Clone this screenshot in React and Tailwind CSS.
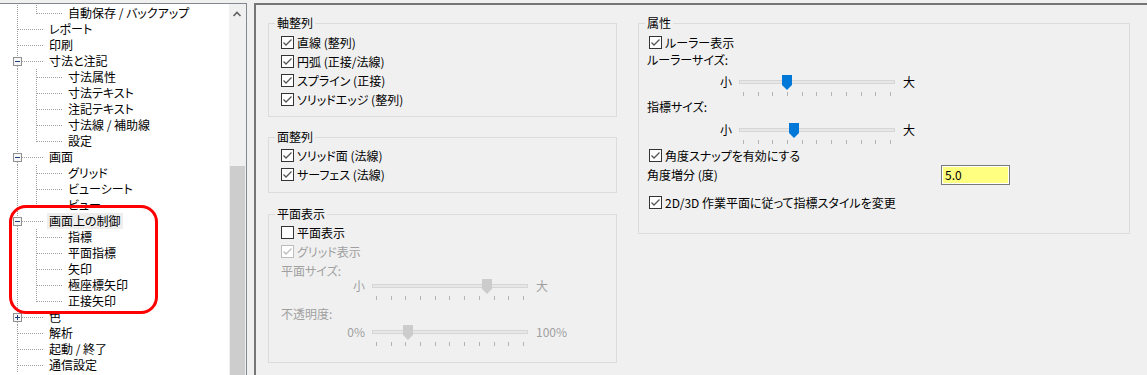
import React from "react"

const treeRows = [
  { label: "自動保存 / バックアップ", level: 2, last: true },
  { label: "レポート", level: 1 },
  { label: "印刷", level: 1 },
  { label: "寸法と注記", level: 1, expander: "minus" },
  { label: "寸法属性", level: 2 },
  { label: "寸法テキスト", level: 2 },
  { label: "注記テキスト", level: 2 },
  { label: "寸法線 / 補助線", level: 2 },
  { label: "設定", level: 2, last: true },
  { label: "画面", level: 1, expander: "minus" },
  { label: "グリッド", level: 2 },
  { label: "ビューシート", level: 2 },
  { label: "ビュー", level: 2, last: true },
  { label: "画面上の制御", level: 1, expander: "minus", selected: true },
  { label: "指標", level: 2 },
  { label: "平面指標", level: 2 },
  { label: "矢印", level: 2 },
  { label: "極座標矢印", level: 2 },
  { label: "正接矢印", level: 2, last: true },
  { label: "色", level: 1, expander: "plus" },
  { label: "解析", level: 1 },
  { label: "起動 / 終了", level: 1 },
  { label: "通信設定", level: 1 },
]

const dot = { stroke: "#a0a0a0", strokeWidth: 1, strokeDasharray: "1 1" }

function TreeLines({ level, last, expander }) {
  const w = level === 1 ? 47 : 66
  return (
    <svg width={w} height="16" className="shrink-0">
      {expander ? (
        <>
          <line x1="17.5" y1="0" x2="17.5" y2="4" {...dot} />
          <line x1="17.5" y1="13" x2="17.5" y2="16" {...dot} />
        </>
      ) : (
        <line x1="17.5" y1="0" x2="17.5" y2="16" {...dot} />
      )}
      {level === 1 && <line x1={expander ? 22 : 18} y1="8.5" x2="44" y2="8.5" {...dot} />}
      {level === 2 && (
        <>
          <line x1="36.5" y1="0" x2="36.5" y2={last ? 9 : 16} {...dot} />
          <line x1="37" y1="8.5" x2="63" y2="8.5" {...dot} />
        </>
      )}
      {expander && (
        <>
          <rect x="13.5" y="4.5" width="8" height="8" fill="#f7f7f7" stroke="#919191" />
          <line x1="15" y1="8.5" x2="20" y2="8.5" stroke="#1f3f7a" />
          {expander === "plus" && <line x1="17.5" y1="6" x2="17.5" y2="11" stroke="#1f3f7a" />}
        </>
      )}
    </svg>
  )
}

function Check({ checked, disabled }) {
  return (
    <span
      className={`w-[13px] h-[13px] shrink-0 bg-white border flex ${disabled ? "border-[#bcbcbc]" : "border-[#333333]"}`}
    >
      {checked && (
        <svg width="11" height="11" viewBox="0 0 11 11">
          <polyline
            points="1.5,5.5 4,8 9.5,2.5"
            fill="none"
            stroke={disabled ? "#bcbcbc" : "#555555"}
            strokeWidth="1.3"
          />
        </svg>
      )}
    </span>
  )
}

function CheckRow({ label, checked, disabled, className = "h-[19px]" }) {
  return (
    <div className={`flex items-center ${className}`}>
      <Check checked={checked} disabled={disabled} />
      <span className={`ml-[3px] ${disabled ? "text-[#a0a0a0]" : "text-black"}`}>{label}</span>
    </div>
  )
}

function Slider({ left, right, thumb, disabled, labelClass, className = "" }) {
  const fill = disabled ? "#cccccc" : "#0078d7"
  const tx = disabled ? "text-[#a0a0a0]" : "text-black"
  return (
    <div className={`flex items-start ${className}`}>
      <span className={`${labelClass} text-right leading-[14px] mr-[7px] ${tx}`}>{left}</span>
      <div className="w-[156px] flex flex-col">
        <div className="relative h-[15px]">
          <div className="absolute left-0 right-0 top-[5px] h-[4px] bg-[#e7e7e7] border border-[#d6d6d6]" />
          <svg width="10" height="15" className="absolute top-0" style={{ left: thumb }}>
            <polygon points="0,0 10,0 10,10 5,15 0,10" fill={fill} />
          </svg>
        </div>
        <div className="flex justify-between px-[4px] mt-[2px]">
          {Array.from({ length: 11 }).map((_, i) => (
            <span key={i} className="w-[1px] h-[4px] bg-[#b4b4b4]" />
          ))}
        </div>
      </div>
      <span className={`ml-[8px] leading-[14px] ${tx}`}>{right}</span>
    </div>
  )
}

function Group({ title, className = "", children }) {
  return (
    <fieldset className={`border border-[#dcdcdc] ${className}`}>
      <legend className="ml-[6px] px-[2px] leading-[16px]">{title}</legend>
      {children}
    </fieldset>
  )
}

export default function App() {
  return (
    <div className="w-[1147px] h-[375px] overflow-hidden bg-[#f0f0f0] pt-[3px] flex text-[12px] leading-[16px] text-black font-['Noto_Sans_CJK_JP',sans-serif] [font-feature-settings:'palt']">
      {/* Tree */}
      <div className="relative w-[247px] h-[372px] shrink-0 bg-white border-t border-r border-[#828790] flex">
        <div className="flex-1 pt-[1px]">
          {treeRows.map((r, i) => (
            <div key={i} className="flex h-[16px] items-center">
              <TreeLines level={r.level} last={r.last} expander={r.expander} />
              <span className={`px-[2px] whitespace-nowrap leading-[16px] ${r.selected ? "bg-[#eeeeee]" : ""}`}>
                {r.label}
              </span>
            </div>
          ))}
        </div>
        <div className="w-[17px] shrink-0 bg-[#f0f0f0] flex flex-col">
          <div className="h-[17px] flex items-center justify-center">
            <svg width="17" height="17">
              <polyline points="4.5,12 8,8.5 11.5,12" fill="none" stroke="#606060" strokeWidth="1.6" />
            </svg>
          </div>
          <div className="mt-[145px] mx-[1px] flex-1 bg-[#cdcdcd]" />
        </div>
        <div className="absolute left-[9px] top-[201px] w-[149px] h-[109px] border-[3px] border-[#ff0000] rounded-[17px]" />
      </div>

      {/* Settings panel */}
      <div className="ml-[7px] flex-1 border-t-2 border-l-2 border-[#767676] flex items-start pt-[10px] pl-[12px]">
        <div className="w-[349px] flex flex-col">
          <Group title="軸整列" className="pb-[7px]">
            <div className="pl-[12px] pt-[2px]">
              <CheckRow label="直線 (整列)" checked />
              <CheckRow label="円弧 (正接/法線)" checked />
              <CheckRow label="スプライン (正接)" checked />
              <CheckRow label="ソリッドエッジ (整列)" checked />
            </div>
          </Group>
          <Group title="面整列" className="mt-[12px] pb-[8px]">
            <div className="pl-[12px] pt-[1px]">
              <CheckRow label="ソリッド面 (法線)" checked />
              <CheckRow label="サーフェス (法線)" checked />
            </div>
          </Group>
          <Group title="平面表示" className="mt-[13px] pb-[16px]">
            <div className="pl-[12px] pt-[1px]">
              <CheckRow label="平面表示" />
              <CheckRow label="グリッド表示" checked disabled />
              <div className="h-[19px] flex items-center text-[#a0a0a0]">平面サイズ:</div>
            </div>
            <Slider left="小" right="大" thumb={110} disabled labelClass="w-[96px]" className="mt-[-1px]" />
            <div className="pl-[12px] h-[19px] mt-[4px] flex items-center text-[#a0a0a0]">不透明度:</div>
            <Slider left="0%" right="100%" thumb={31} disabled labelClass="w-[96px]" className="mt-[2px]" />
          </Group>
        </div>

        <Group title="属性" className="ml-[21px] w-[492px] pb-[21px]">
          <div className="pl-[10px] pt-[2px]">
            <CheckRow label="ルーラー表示" checked />
          </div>
          <div className="pl-[8px] h-[16px] flex items-center">ルーラーサイズ:</div>
          <Slider left="小" right="大" thumb={43} labelClass="w-[93px]" className="mt-[7px]" />
          <div className="pl-[8px] h-[16px] mt-[3px] flex items-center">指標サイズ:</div>
          <Slider left="小" right="大" thumb={50} labelClass="w-[93px]" className="mt-[8px]" />
          <div className="pl-[10px] mt-[2px]">
            <CheckRow label="角度スナップを有効にする" checked />
          </div>
          <div className="flex items-center h-[20px]">
            <span className="ml-[8px] w-[294px]">角度増分 (度)</span>
            <div className="w-[69px] h-[20px] border border-[#7a7a7a] bg-[#ffff80] outline outline-1 outline-white -outline-offset-2 px-[3px] flex items-center">
              5.0
            </div>
          </div>
          <div className="pl-[10px] mt-[8px]">
            <CheckRow label="2D/3D 作業平面に従って指標スタイルを変更" checked />
          </div>
        </Group>
      </div>
    </div>
  )
}
